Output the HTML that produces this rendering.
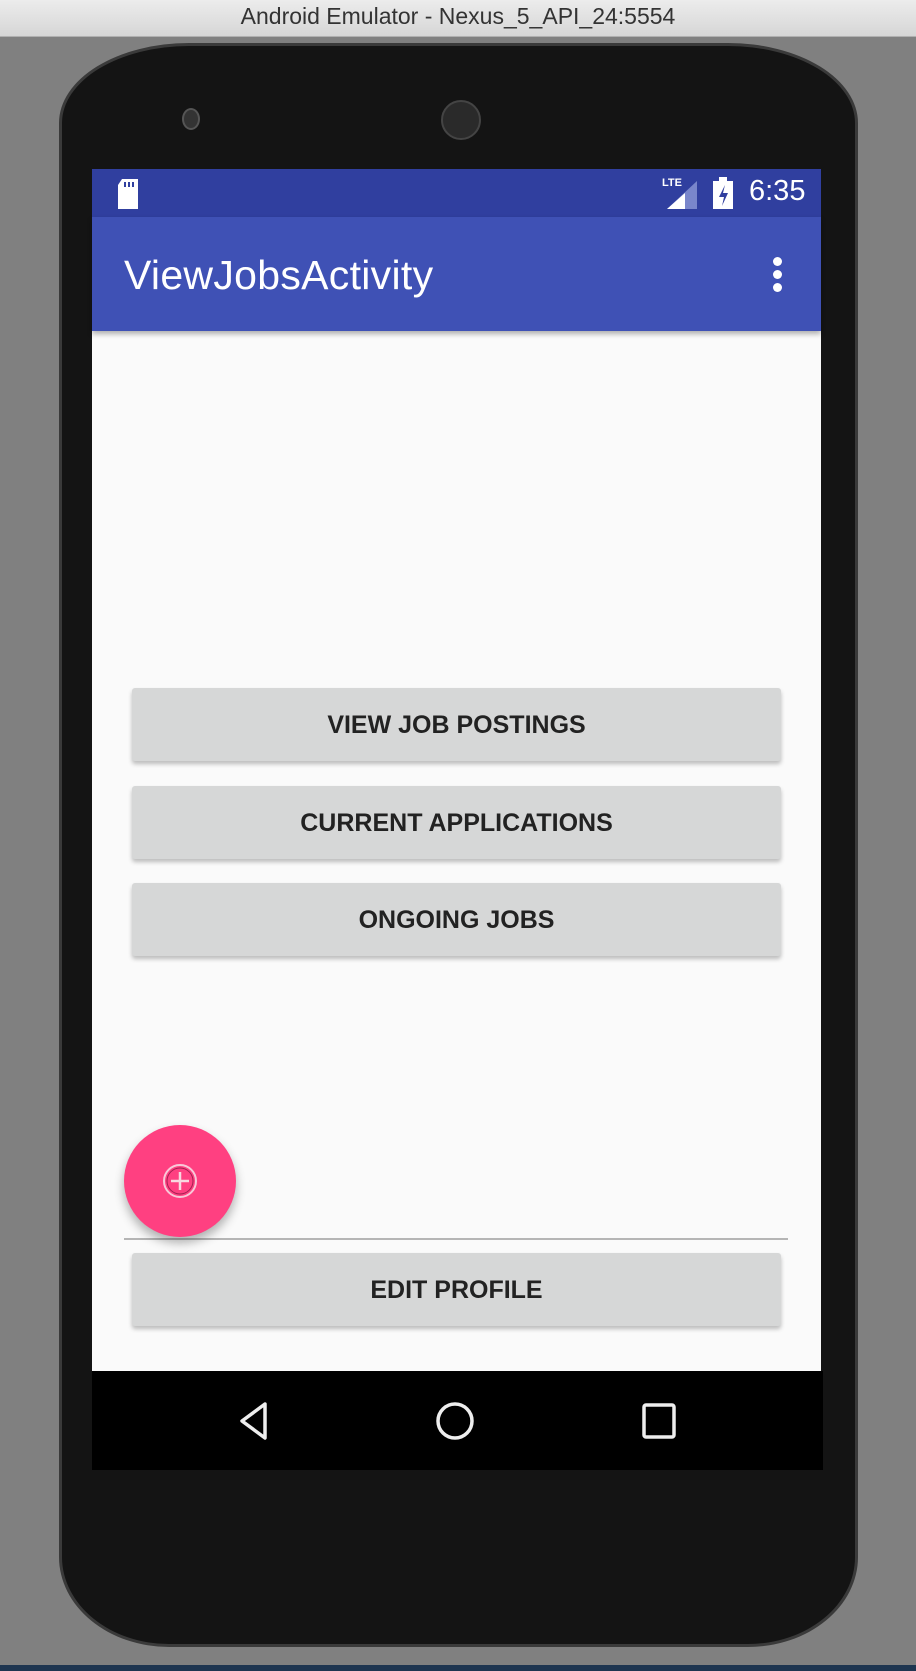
<!DOCTYPE html>
<html><head><style>
body{margin:0;width:916px;height:1671px;background:#808080;position:relative;overflow:hidden;font-family:"Liberation Sans",sans-serif}
.tb{position:absolute;left:0;top:0;width:916px;height:36px;background:linear-gradient(#ececec,#d6d6d6);text-align:center;font-size:23px;line-height:32px;color:#333;border-bottom:1px solid #b0b0b0}
.phone{position:absolute;left:59px;top:43px;width:799px;height:1604px;background:#141414;border-radius:130px 130px 110px 110px/80px 80px 90px 90px;border:3px solid #3a3a3a;box-sizing:border-box}
.screen{position:absolute;left:92px;top:169px;width:729px;height:1202px;background:#fafafa}
.sb{position:absolute;left:0;top:0;width:729px;height:48px;background:#303f9f}
.ab{position:absolute;left:0;top:48px;width:729px;height:114px;background:#3f51b5;box-shadow:0 3px 5px rgba(0,0,0,.3)}
.ab span{position:absolute;left:32px;top:35px;color:#fff;font-size:41px;letter-spacing:.3px}
.btn{position:absolute;left:40px;width:649px;height:73px;background:#d6d7d7;box-shadow:0 3px 4px rgba(0,0,0,.25);border-radius:3px;text-align:center;line-height:75px;font-size:25px;color:#222;font-weight:bold;letter-spacing:0}
.nav{position:absolute;left:92px;top:1371px;width:731px;height:99px;background:#000}
</style></head><body>
<div class="tb">Android Emulator - Nexus_5_API_24:5554</div>
<div class="phone"></div>
<div style="position:absolute;left:182px;top:108px;width:14px;height:18px;border-radius:50%;background:#333;border:2px solid #555"></div>
<div style="position:absolute;left:441px;top:100px;width:36px;height:36px;border-radius:50%;background:#2a2a2a;border:2px solid #444"></div>
<div class="screen">
<div class="sb">
<svg style="position:absolute;left:24px;top:10px" width="24" height="30"><path d="M6 0H22V30H2V6Z" fill="#fff"/><path d="M9 3v5M13 3v5M17 3v5" stroke="#303f9f" stroke-width="2"/></svg>
<div style="position:absolute;left:570px;top:8px;color:#fff;font-size:11px;font-weight:bold">LTE</div>
<svg style="position:absolute;left:575px;top:12px" width="30" height="28"><path d="M30 0V28H0Z" fill="#7986cb"/><path d="M18 12V28H0Z" fill="#fff"/></svg>
<svg style="position:absolute;left:621px;top:8px" width="20" height="32"><rect x="0" y="4" width="20" height="28" fill="#fff"/><rect x="6" y="0" width="8" height="5" fill="#fff"/><path d="M12 8L6 20h5l-2 9 6-13h-5z" fill="#303f9f"/></svg>
<div style="position:absolute;left:657px;top:6px;color:#fff;font-size:29px">6:35</div>
</div>
<div class="ab"><span>ViewJobsActivity</span>
<div style="position:absolute;left:681px;top:40px;width:9px;height:9px;border-radius:50%;background:#fff;box-shadow:0 13px 0 #fff,0 26px 0 #fff"></div></div>
<div class="btn" style="top:519px">VIEW JOB POSTINGS</div>
<div class="btn" style="top:617px">CURRENT APPLICATIONS</div>
<div class="btn" style="top:714px">ONGOING JOBS</div>
<div style="position:absolute;left:32px;top:1069px;width:664px;height:2px;background:#b5b5b5"></div>
<div class="btn" style="top:1084px">EDIT PROFILE</div>
<div style="position:absolute;left:32px;top:956px;width:112px;height:112px;border-radius:50%;background:#ff4081;box-shadow:0 6px 10px rgba(0,0,0,.3)">
<svg style="position:absolute;left:38px;top:38px" width="36" height="36"><circle cx="18" cy="18" r="16" fill="none" stroke="#f8c8d8" stroke-width="2"/><circle cx="18" cy="18" r="13" fill="none" stroke="#a02050" stroke-width="1"/><path d="M18 9v18M9 18h18" stroke="#f8d8e0" stroke-width="2.5"/></svg></div>
</div>
<div class="nav">
<svg style="position:absolute;left:144px;top:29px" width="40" height="44"><path d="M29 4L6 21 29 38Z" fill="none" stroke="#eee" stroke-width="3.5" stroke-linejoin="round"/></svg>
<svg style="position:absolute;left:341px;top:28px" width="44" height="44"><circle cx="22" cy="22" r="17" fill="none" stroke="#eee" stroke-width="3.5"/></svg>
<svg style="position:absolute;left:548px;top:30px" width="40" height="40"><rect x="4" y="4" width="30" height="32" fill="none" stroke="#eee" stroke-width="3.5" rx="2"/></svg>
</div>
<div style="position:absolute;left:0;top:1665px;width:916px;height:6px;background:#1e3550"></div>
</body></html>
